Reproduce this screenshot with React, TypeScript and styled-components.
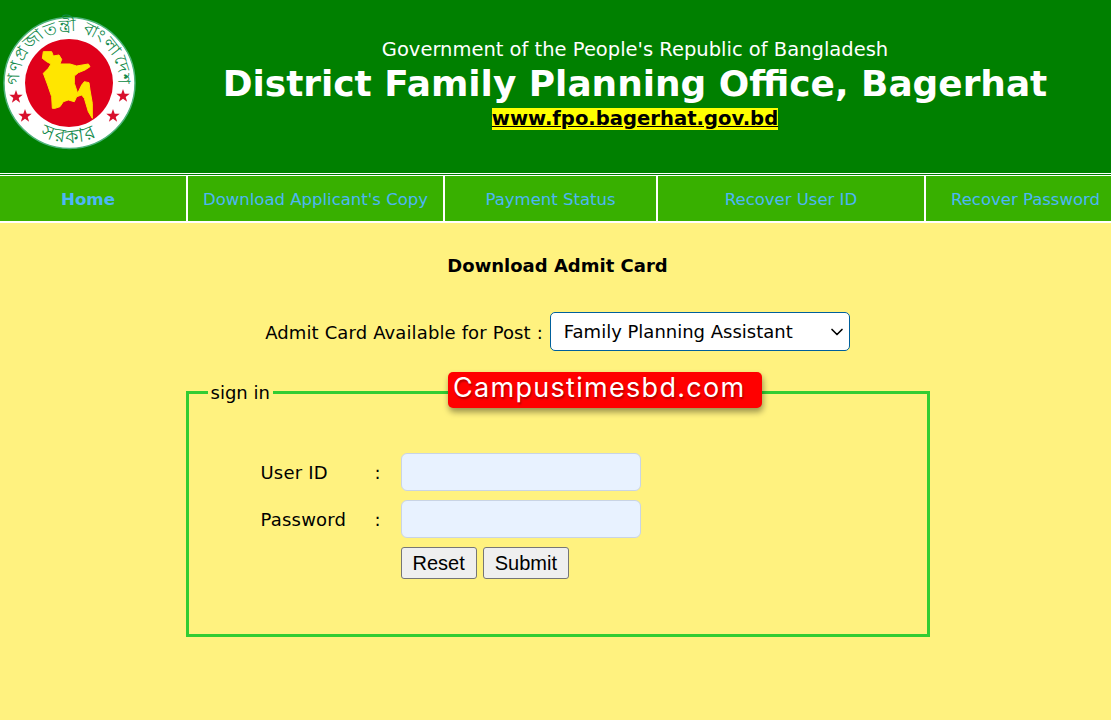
import React from "react";
import styled, { createGlobalStyle } from "styled-components";
import { ChevronDown } from "lucide-react";

const GlobalStyle = createGlobalStyle`
  html, body {
    margin: 0;
    padding: 0;
    background: #fff27f;
    overflow: hidden;
  }
  body {
    font-family: "DejaVu Sans", Verdana, sans-serif;
    color: #000;
  }
`;

const navItems = [
  { label: "Home", width: 188, active: true },
  { label: "Download Applicant's Copy", width: 257 },
  { label: "Payment Status", width: 213 },
  { label: "Recover User ID", width: 268 },
  { label: "Recover Password", width: 199 },
];

const stars = [
  [16, 97],
  [25, 116],
  [123, 96],
  [113, 116],
];

const Seal = () => (
  <SealSvg viewBox="0 0 140 173" aria-label="Government seal">
    <defs>
      <path id="sealTop" d="M20 88 A 49.5 49.5 0 1 1 118 88" />
      <path id="sealBottom" d="M26.6 125.4 A 60 60 0 0 0 111.4 125.4" />
    </defs>
    <circle cx="69.5" cy="83" r="65.5" fill="#fff" stroke="#4fb47c" strokeWidth="1.5" />
    <circle cx="69" cy="83" r="44" fill="#e0001b" />
    <text fontSize="17" letterSpacing="0.9" fill="#138a4b" fontFamily="'Noto Sans', sans-serif">
      <textPath href="#sealTop" startOffset="50%" textAnchor="middle">
        গণপ্রজাতন্ত্রী বাংলাদেশ
      </textPath>
    </text>
    <text fontSize="19" letterSpacing="2" fill="#138a4b" fontFamily="'Noto Sans', sans-serif">
      <textPath href="#sealBottom" startOffset="50%" textAnchor="middle">
        সরকার
      </textPath>
    </text>
    <path
      transform="translate(35 40) scale(0.3333)"
      fill="#ffe600"
      stroke="#ffe600"
      strokeWidth="3"
      strokeLinejoin="round"
      d="M25 35 L50 35 L55 48 L72 45 L80 58 L75 72 L105 72 L125 78 L160 72 L165 80 L150 90 L130 98 L118 108 L118 130 L128 160 L140 135 L148 125 L162 128 L165 150 L172 190 L172 235 L160 215 L148 175 L140 165 L125 170 L118 185 L100 180 L85 185 L75 200 L60 205 L52 205 L50 170 L38 135 L25 100 L40 85 L48 72 L35 65 L22 55 Z"
    />
    {stars.map(([x, y]) => (
      <polygon
        key={`${x}-${y}`}
        transform={`translate(${x} ${y})`}
        fill="#d8102c"
        points="0,-7 1.7,-2.2 6.7,-2.2 2.7,0.9 4.1,5.7 0,2.8 -4.1,5.7 -2.7,0.9 -6.7,-2.2 -1.7,-2.2"
      />
    ))}
  </SealSvg>
);

export default function App() {
  return (
    <Page>
      <GlobalStyle />
      <Header>
        <Seal />
        <HeaderText>
          <GovLine>Government of the People's Republic of Bangladesh</GovLine>
          <OfficeTitle>District Family Planning Office, Bagerhat</OfficeTitle>
          <SiteLink>www.fpo.bagerhat.gov.bd</SiteLink>
        </HeaderText>
      </Header>
      <NavWrap>
        <Nav>
          {navItems.map((item) => (
            <NavItem key={item.label} $width={item.width} $active={item.active}>
              {item.label}
            </NavItem>
          ))}
        </Nav>
      </NavWrap>
      <Main>
        <PageTitle>Download Admit Card</PageTitle>
        <PostRow>
          <PostLabel>Admit Card Available for Post :</PostLabel>
          <SelectWrap>
            <PostSelect defaultValue="fpa">
              <option value="fpa">Family Planning Assistant</option>
            </PostSelect>
            <SelectArrow size={20} strokeWidth={2} />
          </SelectWrap>
        </PostRow>
        <SignIn>
          <SignInLegend>sign in</SignInLegend>
          <FormGrid>
            <FieldLabel>User ID</FieldLabel>
            <Colon>:</Colon>
            <TextInput type="text" />
            <FieldLabel>Password</FieldLabel>
            <Colon>:</Colon>
            <TextInput type="password" />
            <Buttons>
              <FormButton type="button">Reset</FormButton>
              <FormButton type="button">Submit</FormButton>
            </Buttons>
          </FormGrid>
        </SignIn>
        <Watermark>Campustimesbd.com</Watermark>
      </Main>
    </Page>
  );
}

const Page = styled.div`
  width: 1111px;
  height: 720px;
  overflow: hidden;
  background: #fff27f;
`;

const Header = styled.header`
  height: 173px;
  background: #008000;
  display: flex;
`;

const SealSvg = styled.svg`
  width: 140px;
  height: 173px;
  flex: none;
`;

const HeaderText = styled.div`
  flex: 1;
  margin-left: 19px;
  padding-top: 38px;
  display: flex;
  flex-direction: column;
  align-items: center;
  color: #fff;
`;

const GovLine = styled.div`
  font-size: 19.5px;
  line-height: 24px;
  white-space: nowrap;
`;

const OfficeTitle = styled.h1`
  margin: 0;
  font-size: 35.9px;
  line-height: 44px;
  font-weight: 700;
  white-space: nowrap;
`;

const SiteLink = styled.a`
  margin-top: 2px;
  font-size: 19.6px;
  line-height: 22px;
  font-weight: 700;
  color: #000;
  background: #ffff00;
  text-decoration: underline;
`;

const NavWrap = styled.div`
  background: #008000;
  border-top: 1px solid #fff;
  padding-top: 1px;
`;

const Nav = styled.nav`
  display: flex;
  height: 45px;
  background: #38b000;
  border-top: 1px solid #fff;
  border-bottom: 2px solid #fff;
`;

const NavItem = styled.a<{ $width: number; $active?: boolean }>`
  flex: none;
  width: ${({ $width }) => $width}px;
  box-sizing: border-box;
  display: flex;
  align-items: center;
  justify-content: center;
  padding-top: 1px;
  padding-right: ${({ $active }) => ($active ? "10px" : "0")};
  font-size: ${({ $active }) => ($active ? "16.7px" : "16.5px")};
  font-weight: ${({ $active }) => ($active ? 700 : 400)};
  color: #4db6f5;
  white-space: nowrap;
  &:not(:last-child) {
    border-right: 2px solid #fff;
  }
`;

const Main = styled.main`
  position: relative;
  display: flex;
  flex-direction: column;
  align-items: center;
  padding-left: 4px;
`;

const PageTitle = styled.h2`
  margin: 33px 0 0;
  font-size: 18px;
  line-height: 20px;
  font-weight: 700;
`;

const PostRow = styled.div`
  display: flex;
  align-items: center;
  gap: 7px;
  margin-top: 36px;
`;

const PostLabel = styled.span`
  padding-top: 2px;
  font-size: 18px;
  letter-spacing: 0.13px;
`;

const SelectWrap = styled.div`
  position: relative;
  width: 300px;
  height: 39px;
`;

const PostSelect = styled.select`
  width: 100%;
  height: 100%;
  box-sizing: border-box;
  padding: 0 0 0 13px;
  appearance: none;
  font-family: inherit;
  font-size: 18px;
  color: #000;
  background: #fff;
  border: 1px solid #00609c;
  border-radius: 5px;
`;

const SelectArrow = styled(ChevronDown)`
  position: absolute;
  right: 3px;
  top: 10px;
  color: #000;
  pointer-events: none;
`;

const SignIn = styled.fieldset`
  width: 744px;
  height: 255px;
  box-sizing: border-box;
  margin: 31px 0 0;
  padding: 0;
  border: 3px solid #32cd32;
`;

const SignInLegend = styled.legend`
  margin-left: 19px;
  padding: 0 3px;
  font-size: 18px;
  line-height: 21px;
`;

const FormGrid = styled.div`
  display: grid;
  grid-template-columns: 114px 26px 240px;
  grid-auto-rows: 38px;
  row-gap: 9px;
  align-items: center;
  margin: 50px 0 0 72px;
`;

const FieldLabel = styled.label`
  font-size: 18px;
  letter-spacing: 0.2px;
`;

const Colon = styled.span`
  font-size: 18px;
`;

const TextInput = styled.input`
  width: 240px;
  height: 38px;
  box-sizing: border-box;
  background: #e8f2ff;
  border: 1px solid #c9d4e4;
  border-radius: 6px;
`;

const Buttons = styled.div`
  grid-column: 3;
  display: flex;
  gap: 6px;
  align-self: start;
`;

const FormButton = styled.button`
  height: 32px;
  padding: 0 11px;
  font-family: "Liberation Sans", Arial, sans-serif;
  font-size: 20px;
  color: #000;
  background: #efefef;
  border: 1px solid #767676;
  border-radius: 3px;
`;

const Watermark = styled.div`
  position: absolute;
  left: 448px;
  top: 149px;
  width: 314px;
  height: 36px;
  box-sizing: border-box;
  padding-left: 5px;
  background: #ff0000;
  border-radius: 5px;
  box-shadow: 1px 4px 6px rgba(0, 0, 0, 0.4);
  color: #fff;
  font-family: Inter, "Open Sans", sans-serif;
  font-size: 27px;
  letter-spacing: 1.3px;
  line-height: 32px;
  white-space: nowrap;
  text-shadow: 1px 2px 2px rgba(120, 0, 0, 0.6);
`;
